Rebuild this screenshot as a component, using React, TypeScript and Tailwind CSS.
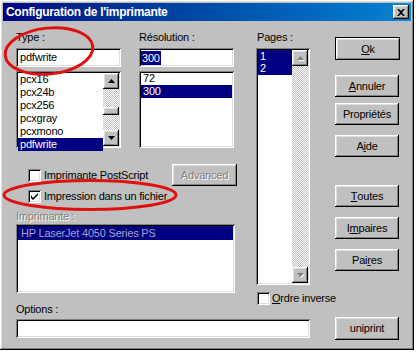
import React from 'react';

// Win98 bevels
const sunken = 'shadow-[inset_1px_1px_0_#808080,inset_-1px_-1px_0_#ffffff,inset_2px_2px_0_#000000,inset_-2px_-2px_0_#dfdfdf]';
const raised = 'shadow-[inset_-1px_-1px_0_#000000,inset_1px_1px_0_#ffffff,inset_-2px_-2px_0_#808080,inset_2px_2px_0_#dfdfdf]';
const dither = 'bg-[image:repeating-conic-gradient(#c0c0c0_0_25%,#ffffff_0_50%)] bg-[length:2px_2px]';

const Arrow: React.FC<{ up?: boolean; disabled?: boolean }> = ({ up, disabled }) => (
    <div className={`${raised} w-[16px] h-[16px] bg-[#c0c0c0] flex items-center justify-center`}>
        <svg width="7" height="4" viewBox="0 0 7 4" className={disabled ? 'drop-shadow-[1px_1px_0_#ffffff]' : ''}>
            <path d={up ? 'M3.5 0 L7 4 L0 4 Z' : 'M0 0 L7 0 L3.5 4 Z'} fill={disabled ? '#808080' : '#000000'} />
        </svg>
    </div>
);

const Btn: React.FC<{ children: React.ReactNode; className?: string; disabled?: boolean }> = ({ children, className = '', disabled }) => (
    <div
        className={`${raised} w-[64px] h-[22px] bg-[#c0c0c0] flex items-center justify-center ${disabled ? 'text-[#808080] [text-shadow:1px_1px_0_#ffffff]' : ''} ${className}`}
    >
        {children}
    </div>
);

const Check: React.FC<{ checked?: boolean }> = ({ checked }) => (
    <div className={`${sunken} w-[13px] h-[13px] bg-white flex items-center justify-center shrink-0`}>
        {checked && (
            <svg width="7" height="7" viewBox="0 0 7 7">
                <path d="M0 2 L0 5 L2 7 L7 2 L7 0 L2 5 Z" fill="#000" />
            </svg>
        )}
    </div>
);

const Row: React.FC<{ children: React.ReactNode; selected?: boolean; className?: string }> = ({ children, selected, className = '' }) => (
    <div className={`h-[13px] leading-[13px] pl-[2px] whitespace-nowrap ${selected ? 'bg-[#000080] text-white' : ''} ${className}`}>
        {children}
    </div>
);

const u = (s: string) => <span className="underline underline-offset-[1px]">{s}</span>;

export default function App() {
    const typeItems = ['pcx16', 'pcx24b', 'pcx256', 'pcxgray', 'pcxmono', 'pdfwrite'];

    return (
        <div className="relative w-[419px] h-[352px] bg-white font-['Liberation_Sans',Arial,sans-serif] text-[11px] tracking-[-0.2px] text-black overflow-hidden">
            <div className={`w-[414px] h-[350px] bg-[#c0c0c0] p-[3px] ${raised}`}>
                {/* Title bar */}
                <div className="h-[18px] flex items-center bg-gradient-to-r from-[#000080] to-[#1084d0] pl-[3px] pr-[2px]">
                    <span className="text-white font-bold text-[12px] tracking-[-0.3px]">Configuration de l'imprimante</span>
                    <div className={`${raised} ml-auto w-[16px] h-[14px] bg-[#c0c0c0] flex items-center justify-center`}>
                        <svg width="8" height="7" viewBox="0 0 8 7">
                            <path d="M0 0 H2 L4 2 L6 0 H8 L5 3.5 L8 7 H6 L4 5 L2 7 H0 L3 3.5 Z" fill="#000" />
                        </svg>
                    </div>
                </div>

                <div className="flex pl-[13px]">
                    <div className="flex flex-col">
                        <div className="flex items-start">
                            {/* Left column */}
                            <div className="w-[221px] pt-[10px] flex flex-col">
                                <div className="flex">
                                    <div className="w-[105px] flex flex-col">
                                        <div className="h-[12px] leading-[12px] mb-[5px]">Type :</div>
                                        <div className={`${sunken} h-[19px] bg-white flex items-center pl-[4px]`}>pdfwrite</div>
                                        <div className={`${sunken} mt-[4px] h-[77px] bg-white p-[2px] flex`}>
                                            <div className="flex-1">
                                                {typeItems.map((t) => (
                                                    <Row key={t} selected={t === 'pdfwrite'} className="h-[12px] leading-[12px]">{t}</Row>
                                                ))}
                                            </div>
                                            <div className={`w-[16px] flex flex-col ${dither}`}>
                                                <Arrow up />
                                                <div className="flex-1 pt-[18px]">
                                                    <div className={`${raised} h-[8px] bg-[#c0c0c0]`} />
                                                </div>
                                                <Arrow />
                                            </div>
                                        </div>
                                    </div>
                                    <div className="w-[95px] ml-[18px] flex flex-col">
                                        <div className="h-[12px] leading-[12px] mb-[5px]">Résolution :</div>
                                        <div className={`${sunken} h-[19px] bg-white flex items-center pl-[2px]`}>
                                            <span className="bg-[#000080] text-white leading-[14px] px-[1px]">300</span>
                                        </div>
                                        <div className={`${sunken} mt-[4px] h-[77px] bg-white p-[2px] overflow-hidden`}>
                                            <div className="-mt-[1px]">
                                                <Row>72</Row>
                                                <Row selected>300</Row>
                                            </div>
                                        </div>
                                    </div>
                                </div>

                                <div className="mt-[16px] h-[22px] flex items-center">
                                    <div className="ml-[12px]"><Check /></div>
                                    <span className="ml-[3px]">Imprimante PostScript</span>
                                    <Btn className="ml-auto w-[65px]" disabled>Advanced</Btn>
                                </div>
                                <div className="mt-[4px] h-[13px] flex items-center">
                                    <div className="ml-[12px]"><Check checked /></div>
                                    <span className="ml-[3px]">Impression dans un fichier</span>
                                </div>
                                <div className="mt-[7px] h-[12px] leading-[12px] text-[#808080] [text-shadow:1px_1px_0_#ffffff]">Imprimante :</div>
                                <div className={`${sunken} mt-[2px] w-[219px] h-[69px] bg-white p-[2px]`}>
                                    <Row className="bg-[#000080] text-[#a4a4cc] h-[14px] leading-[14px] pl-[3px]">HP LaserJet 4050 Series PS</Row>
                                </div>
                            </div>

                            {/* Pages column */}
                            <div className="ml-[19px] w-[54px] pt-[10px] flex flex-col">
                                <div className="h-[12px] leading-[12px] mb-[5px] pl-[1px]">Pages :</div>
                                <div className={`${sunken} h-[237px] bg-white p-[2px] flex`}>
                                    <div className="flex-1">
                                        <Row selected>1</Row>
                                        <Row selected className="-mt-[1px]">2</Row>
                                    </div>
                                    <div className={`w-[16px] flex flex-col justify-between ${dither}`}>
                                        <Arrow up disabled />
                                        <Arrow disabled />
                                    </div>
                                </div>
                                <div className="mt-[7px] h-[13px] flex items-center whitespace-nowrap">
                                    <div className="ml-[1px]"><Check /></div>
                                    <span className="ml-[2px]">{u('O')}rdre inverse</span>
                                </div>
                            </div>
                        </div>

                        {/* Options */}
                        <div className="-mt-[2px] h-[12px] leading-[12px]">Options :</div>
                        <div className={`${sunken} mt-[4px] w-[294px] h-[19px] bg-white`} />
                    </div>

                    {/* Buttons column */}
                    <div className="ml-[25px] pt-[16px] flex flex-col">
                        <div className="w-[65px] h-[23px] border border-black">
                            <Btn className="w-[63px] h-[21px]">{u('O')}k</Btn>
                        </div>
                        <Btn className="mt-[15px]">{u('A')}nnuler</Btn>
                        <Btn className="mt-[6px]">Propriétés</Btn>
                        <Btn className="mt-[10px]">A{u('i')}de</Btn>
                        <Btn className="mt-[28px]">{u('T')}outes</Btn>
                        <Btn className="mt-[10px]">I{u('m')}paires</Btn>
                        <Btn className="mt-[10px]">Pai{u('r')}es</Btn>
                        <Btn className="mt-[46px] h-[23px]">uniprint</Btn>
                    </div>
                </div>
            </div>

            {/* red annotations */}
            <svg className="absolute left-0 top-0 pointer-events-none" width="419" height="352">
                <ellipse cx="49" cy="51" rx="44" ry="23" transform="rotate(-6 49 51)" fill="none" stroke="#e01010" strokeWidth="3" />
                <ellipse cx="90" cy="195" rx="86" ry="14.5" fill="none" stroke="#e01010" strokeWidth="3" />
            </svg>
        </div>
    );
}
